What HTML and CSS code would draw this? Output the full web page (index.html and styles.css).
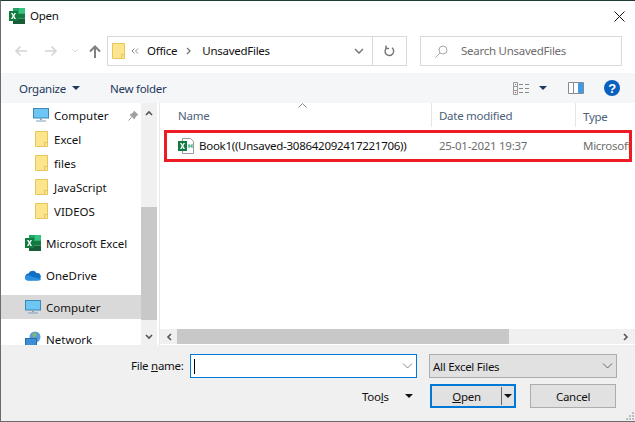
FILE: index.html
```html
<!DOCTYPE html>
<html>

<head>
  <meta charset="utf-8">
  <title>Open</title>
  <link rel="stylesheet" href="styles.css">
</head>

<body>
  <svg class="defs" width="0" height="0">
    <symbol id="folder" viewBox="0 0 13 16">
      <path d="M.5.5h12v15H.5z" fill="#fce58f" stroke="#e8c55a" />
      <path d="M9.5 15.5v-4h3" fill="none" stroke="#e8c55a" />
    </symbol>
    <symbol id="xl" viewBox="0 0 16 16">
      <path d="M4 0h12v5.300H4z" fill="#21a366" />
      <path d="M4 5.300h12v5.400H4z" fill="#107c41" />
      <path d="M4 10.700h12V16H4z" fill="#185c37" />
      <path d="M10 0h6v5.300h-6z" fill="#33c481" />
      <rect x="0" y="3" width="9" height="10" fill="#107c41" />
      <path d="M2 5h1.500l1 1.800 1-1.800H7L5.300 8 7 11H5.500l-1-1.800-1 1.800H2l1.700-3z" fill="#fff" />
    </symbol>
    <symbol id="monitor" viewBox="0 0 16 14">
      <rect x=".5" y=".5" width="15" height="9.500" fill="#6ec6f5" stroke="#3f87b5" />
      <path d="M7 10.500h2V12H7z" fill="#8aa4b8" />
      <path d="M3 13h10" stroke="#7f9db5" />
    </symbol>
  </svg>

  <div class="dialog">
    <header class="titlebar">
      <svg class="title-icon" width="16" height="16"><use href="#xl" /></svg>
      <span class="title-text">Open</span>
      <svg class="close" width="11" height="11" viewBox="0 0 11 11">
        <path d="M.5.500l10 10M10.500.500l-10 10" stroke="#111" fill="none" />
      </svg>
    </header>

    <nav class="navbar">
      <div class="nav-buttons">
        <svg width="14" height="12" viewBox="0 0 14 12"><path d="M13 6H2M6.500 1.500L2 6l4.500 4.500" stroke="#d4d4d4" stroke-width="1.500" fill="none" /></svg>
        <svg class="nav-fwd" width="14" height="12" viewBox="0 0 14 12"><path d="M1 6h11M7.500 1.500L12 6l-4.500 4.500" stroke="#d4d4d4" stroke-width="1.500" fill="none" /></svg>
        <svg class="nav-down" width="6" height="4" viewBox="0 0 6 4"><path d="M.500.500L3 3 5.500.500" stroke="#d4d4d4" fill="none" /></svg>
        <svg class="nav-up" width="12" height="13" viewBox="0 0 12 13"><path d="M6 13V2M1 6.500L6 1.500l5 5" stroke="#808080" stroke-width="2" fill="none" /></svg>
      </div>
      <div class="address">
        <svg class="addr-folder" width="13" height="16"><use href="#folder" /></svg>
        <svg class="addr-more" width="8" height="6" viewBox="0 0 8 6"><path d="M3.500.500L1 3l2.500 2.500M7 .500L4.500 3 7 5.500" stroke="#888" fill="none" /></svg>
        <span class="crumb">Office</span>
        <svg class="addr-sep" width="5" height="8" viewBox="0 0 5 8"><path d="M1 1l3 3-3 3" stroke="#777" stroke-width="1.300" fill="none" /></svg>
        <span class="crumb">UnsavedFiles</span>
        <svg class="addr-chev" width="10" height="6" viewBox="0 0 10 6"><path d="M1 1l4 4 4-4" stroke="#777" stroke-width="1.500" fill="none" /></svg>
        <div class="refresh">
          <svg width="11" height="12" viewBox="0 0 11 12"><path d="M3 2.600a4.300 4.300 0 1 0 5 .2M2 .5v3h3" stroke="#777" stroke-width="1.400" fill="none" /></svg>
        </div>
      </div>
      <div class="search">
        <svg width="13" height="13" viewBox="0 0 13 13"><circle cx="8" cy="5" r="4" stroke="#a8a8a8" fill="none" /><path d="M5 8l-4.500 4.500" stroke="#b89c8a" fill="none" /></svg>
        <span class="search-text">Search UnsavedFiles</span>
      </div>
    </nav>

    <div class="toolbar">
      <span class="tool-btn organize">Organize</span>
      <i class="tri tri-navy organize-tri"></i>
      <span class="tool-btn new-folder">New folder</span>
      <svg class="view-icon" width="16" height="13" viewBox="0 0 16 13">
        <path d="M.5.500h4v12h-4zM.5 4.500h4M.5 8.500h4" stroke="#999" fill="none" />
        <path d="M6 2.500h4M12 2.500h4M6 6.500h4M12 6.500h4M6 10.500h4M12 10.500h4" stroke="#888" />
        <path d="M2 2h1v1H2z" fill="#4a7ab5" /><path d="M2 10h1v1H2z" fill="#c33" />
      </svg>
      <i class="tri tri-navy view-tri"></i>
      <svg class="pane-icon" width="16" height="12" viewBox="0 0 16 12">
        <path d="M.5.500h15v11H.5z" fill="#fff" stroke="#8a8a8a" />
        <path d="M10 1h5v10h-5z" fill="#3f9be8" />
        <path d="M5.500 1v10" stroke="#8a8a8a" />
      </svg>
      <svg class="help-icon" width="16" height="16" viewBox="0 0 16 16">
        <circle cx="8" cy="8" r="8" fill="#0a5fc0" />
        <text x="8" y="12.500" class="help-mark" text-anchor="middle">?</text>
      </svg>
    </div>

    <main class="browser">
      <aside class="sidebar">
        <ul class="tree">
          <li class="tree-row indent">
            <svg width="16" height="14"><use href="#monitor" /></svg>
            <span>Computer</span>
            <svg class="pin" width="11" height="11" viewBox="0 0 11 11"><path d="M6 .5l4.500 4.500-1.500.5L7 8 6.500 9.500 1.500 4.500 3 4l2.500-2z" fill="#a0a0a0" /><path d="M3.500 7.500L.5 10.500" stroke="#a0a0a0" /></svg>
          </li>
          <li class="tree-row indent"><svg class="small-folder" width="13" height="16"><use href="#folder" /></svg><span>Excel</span></li>
          <li class="tree-row indent"><svg class="small-folder" width="13" height="16"><use href="#folder" /></svg><span>files</span></li>
          <li class="tree-row indent"><svg class="small-folder" width="13" height="16"><use href="#folder" /></svg><span>JavaScript</span></li>
          <li class="tree-row indent"><svg class="small-folder" width="13" height="16"><use href="#folder" /></svg><span>VIDEOS</span></li>
        </ul>
        <ul class="tree">
          <li class="tree-row"><svg width="16" height="16"><use href="#xl" /></svg><span>Microsoft Excel</span></li>
        </ul>
        <ul class="tree">
          <li class="tree-row">
            <svg width="16" height="11" viewBox="0 0 16 11"><path d="M4 10.500a3.500 3.500 0 0 1-.5-7A4.500 4.500 0 0 1 11.500 3a3.700 3.700 0 0 1 1 7.500z" fill="#0f6fc6" /><path d="M0 8.500a3 3 0 0 1 3-3.500l5 2 8 2a2 2 0 0 1-2 1.500H2.500A2.500 2.500 0 0 1 0 8.500z" fill="#2a8fe0" /></svg>
            <span>OneDrive</span>
          </li>
        </ul>
        <ul class="tree">
          <li class="tree-row selected"><svg width="16" height="14"><use href="#monitor" /></svg><span>Computer</span></li>
        </ul>
        <ul class="tree">
          <li class="tree-row">
            <svg width="16" height="16" viewBox="0 0 16 16"><circle cx="10" cy="6" r="5.500" fill="#5a9bd5" /><path d="M7 3l3-2 2 3-3 3z" fill="#7cb87a" /><rect x=".5" y="7.500" width="11" height="8" fill="#3d8ed6" stroke="#2a6aa5" /></svg>
            <span>Network</span>
          </li>
        </ul>
      </aside>

      <div class="vscroll">
        <div class="vscroll-up"><svg width="8" height="6" viewBox="0 0 8 6"><path d="M1 5l3-3 3 3" stroke="#555" stroke-width="1.600" fill="none" /></svg></div>
        <div class="vscroll-thumb"></div>
        <div class="vscroll-down"><svg width="8" height="6" viewBox="0 0 8 6"><path d="M1 1l3 3 3-3" stroke="#555" stroke-width="1.600" fill="none" /></svg></div>
      </div>

      <section class="files">
        <svg class="sort-caret" width="9" height="5" viewBox="0 0 9 5"><path d="M.5 4.500l4-4 4 4" stroke="#888" fill="none" /></svg>
        <div class="file-head">
          <span class="col-name">Name</span>
          <span class="col-date">Date modified</span>
          <span class="col-type">Type</span>
        </div>
        <div class="file-row">
          <svg class="file-icon" width="16" height="16" viewBox="0 0 16 16">
            <path d="M4.500.5h8l3 3v12h-11z" fill="#fff" stroke="#9a9a9a" />
            <rect x="0" y="3" width="9" height="10" fill="#107c41" />
            <path d="M2 5h1.500l1 1.800 1-1.800H7L5.300 8 7 11H5.500l-1-1.800-1 1.800H2l1.700-3z" fill="#fff" />
            <path d="M11 6v4M14 6v4M11 8h3" stroke="#21a366" />
          </svg>
          <span class="file-name">Book1((Unsaved-308642092417221706))</span>
          <span class="file-date">25-01-2021 19:37</span>
          <span class="file-type">Microsoft</span>
        </div>
        <div class="file-space"></div>
        <div class="hscroll">
          <div class="hscroll-left"><svg width="6" height="8" viewBox="0 0 6 8"><path d="M5 1L2 4l3 3" stroke="#555" stroke-width="1.600" fill="none" /></svg></div>
          <div class="hscroll-thumb"></div>
          <div class="hscroll-right"><svg width="6" height="8" viewBox="0 0 6 8"><path d="M1 1l3 3-3 3" stroke="#555" stroke-width="1.600" fill="none" /></svg></div>
        </div>
      </section>
    </main>

    <footer class="actions">
      <div class="action-row">
        <label class="name-label">File <u>n</u>ame:</label>
        <div class="name-input">
          <i class="caret"></i>
          <svg class="chev" width="11" height="6" viewBox="0 0 11 6"><path d="M1 .5l4.500 4.500L10 .5" stroke="#888" fill="none" /></svg>
        </div>
        <div class="type-select">
          <span>All Excel Files</span>
          <svg class="chev" width="11" height="6" viewBox="0 0 11 6"><path d="M1 .5l4.500 4.500L10 .5" stroke="#666" fill="none" /></svg>
        </div>
      </div>
      <div class="action-row buttons">
        <span class="tools">Too<u>l</u>s</span>
        <i class="tri tri-dark tools-tri"></i>
        <button class="btn btn-open">
          <span class="open-label"><u>O</u>pen</span>
          <span class="open-split"><i class="tri tri-dark"></i></span>
        </button>
        <button class="btn btn-cancel">Cancel</button>
      </div>
      <svg class="grip" width="10" height="10" viewBox="0 0 10 10">
        <path d="M7 1h2v2H7zM4 4h2v2H4zM7 4h2v2H7zM1 7h2v2H1zM4 7h2v2H4zM7 7h2v2H7z" fill="#bdbdbd" />
      </svg>
    </footer>
  </div>
</body>

</html>
```

FILE: styles.css
```css
html,
body {
  margin: 0;
  padding: 0;
}

body {
  width: 635px;
  height: 422px;
  overflow: hidden;
  font-family: "Noto Sans", "Open Sans", sans-serif;
  font-size: 11.5px;
  letter-spacing: -0.27px;
  color: #111;
  background: #fff;
}

.defs {
  position: absolute;
}

svg {
  display: block;
  flex: none;
}

ul {
  list-style: none;
  margin: 0;
  padding: 0;
}

.dialog {
  display: flex;
  flex-direction: column;
  box-sizing: border-box;
  height: 422px;
  border-top: 1px solid #1e3d30;
  border-left: 1px solid #6b6b6b;
  border-bottom: 1px solid #6b6b6b;
}

/* title */
.titlebar {
  display: flex;
  align-items: center;
  height: 30px;
  padding-left: 8px;
  padding-right: 10px;
}

.title-text {
  margin-left: 5px;
  padding-bottom: 2px;
}

.close {
  margin-left: auto;
}

/* address row */
.navbar {
  display: flex;
  height: 42px;
  box-sizing: border-box;
  padding-top: 5px;
}

.nav-buttons {
  display: flex;
  align-items: center;
  width: 106px;
  height: 30px;
  padding-left: 13px;
  box-sizing: border-box;
}

.nav-fwd {
  margin-left: 16px;
}

.nav-down {
  margin-left: 14px;
}

.nav-up {
  margin-left: 11px;
}

.address {
  display: flex;
  align-items: center;
  width: 300px;
  height: 30px;
  box-sizing: border-box;
  border: 1px solid #d9d9d9;
}

.addr-folder {
  margin-left: 4px;
}

.addr-more {
  margin-left: 6px;
}

.crumb {
  margin-left: 8px;
  padding-bottom: 2px;
}

.addr-sep {
  margin-left: 9px;
  margin-right: 3px;
}

.addr-chev {
  margin-left: auto;
  margin-right: 8px;
}

.refresh {
  display: flex;
  align-items: center;
  justify-content: center;
  width: 33px;
  height: 28px;
  border-left: 1px solid #d9d9d9;
}

.search {
  display: flex;
  align-items: center;
  width: 202px;
  height: 30px;
  margin-left: 13px;
  padding-left: 14px;
  box-sizing: border-box;
  border: 1px solid #d9d9d9;
}

.search-text {
  margin-left: 13px;
  padding-bottom: 2px;
  color: #6d6d6d;
}

/* command bar */
.toolbar {
  display: flex;
  align-items: center;
  height: 30px;
  padding-left: 18px;
  background: #f5f6f7;
  color: #1e395b;
}

.tri {
  display: block;
  width: 0;
  height: 0;
  border-left: 4px solid transparent;
  border-right: 4px solid transparent;
  border-top: 4px solid #000;
}

.tri-navy {
  border-top-color: #1e395b;
}

.tri-dark {
  border-top-color: #111;
}

.organize {
  width: 53px;
}

.new-folder {
  margin-left: 30px;
}

.view-icon {
  margin-left: auto;
}

.view-tri {
  margin-left: 10px;
}

.pane-icon {
  margin-left: 21px;
}

.help-icon {
  margin-left: 20px;
  margin-right: 15px;
}

.help-mark {
  font-family: "Liberation Sans", sans-serif;
  font-size: 13px;
  font-weight: 700;
  fill: #fff;
}

/* main area */
.browser {
  display: flex;
  height: 242px;
  flex: none;
}

.sidebar {
  flex: none;
  width: 140px;
  height: 242px;
  overflow: hidden;
  letter-spacing: 0;
}

.tree {
  margin-bottom: 8px;
}

.tree-row {
  display: flex;
  align-items: center;
  gap: 5px;
  height: 24px;
  padding-left: 24px;
}

.tree-row.indent {
  padding-left: 32px;
}

.small-folder {
  margin-left: 2px;
  margin-right: 1px;
}

.selected {
  background: #d9d9d9;
}

.pin {
  margin-left: auto;
  margin-right: 2px;
}

.vscroll {
  display: flex;
  flex-direction: column;
  flex: none;
  width: 16px;
  height: 242px;
  background: #f0f0f0;
}

.vscroll-up {
  display: flex;
  align-items: center;
  justify-content: center;
  height: 19px;
  margin-bottom: 85px;
}

.vscroll-thumb {
  height: 113px;
  background: #c8c8c8;
}

.vscroll-down {
  display: flex;
  align-items: center;
  justify-content: center;
  flex: 1;
  padding-top: 9px;
  box-sizing: border-box;
}

.files {
  position: relative;
  display: flex;
  flex-direction: column;
  flex: 1;
  min-width: 0;
  margin-left: 2px;
  border-left: 1px solid #e8e8e8;
}

.sort-caret {
  position: absolute;
  left: 138px;
  top: 0;
}

.file-head {
  display: flex;
  align-items: center;
  height: 24px;
  flex: none;
  color: #4c607a;
}

.col-name {
  width: 272px;
  box-sizing: border-box;
  padding-top: 1px;
  padding-left: 18px;
  border-right: 1px solid #e5e5e5;
  line-height: 23px;
}

.col-date {
  width: 144px;
  box-sizing: border-box;
  padding-top: 1px;
  padding-left: 7px;
  border-right: 1px solid #e5e5e5;
  line-height: 23px;
}

.col-type {
  padding-top: 2px;
  padding-left: 7px;
}

.file-row {
  display: flex;
  align-items: center;
  height: 32px;
  flex: none;
  box-sizing: border-box;
  margin: 3px 3px 0 4px;
  border: 3px solid #ed1c24;
  padding-left: 11px;
  overflow: hidden;
}

.file-icon {
  margin-right: 5px;
}

.file-name {
  flex: none;
  width: 240px;
  padding-bottom: 2px;
  white-space: nowrap;
}

.file-date {
  flex: none;
  width: 144px;
  padding-bottom: 2px;
  color: #6d6d6d;
}

.file-type {
  padding-bottom: 2px;
  color: #6d6d6d;
}

.file-space {
  flex: 1;
}

.hscroll {
  display: flex;
  height: 15px;
  flex: none;
  margin-bottom: 1px;
  background: #f0f0f0;
}

.hscroll-left {
  display: flex;
  align-items: center;
  justify-content: center;
  width: 17px;
}

.hscroll-thumb {
  width: 332px;
  background: #c8c8c8;
}

.hscroll-right {
  display: flex;
  align-items: center;
  justify-content: flex-end;
  flex: 1;
  padding-right: 6px;
}

/* bottom */
.actions {
  position: relative;
  flex: 1;
  background: #f0f0f0;
  padding-top: 9px;
}

.action-row {
  display: flex;
  align-items: center;
  height: 24px;
}

.name-label {
  margin-left: 130px;
  width: 59px;
  padding-bottom: 2px;
}

.name-input {
  display: flex;
  align-items: center;
  width: 227px;
  height: 24px;
  box-sizing: border-box;
  border: 1px solid #0078d7;
  background: #fff;
  padding-left: 3px;
  padding-right: 3px;
}

.caret {
  display: block;
  width: 1px;
  height: 15px;
  background: #000;
}

.chev {
  margin-left: auto;
}

.type-select {
  display: flex;
  align-items: center;
  width: 188px;
  height: 24px;
  margin-left: 12px;
  padding: 0 3px;
  box-sizing: border-box;
  border: 1px solid #adadad;
  background: #e1e1e1;
}

.buttons {
  margin-top: 6px;
}

.tools {
  width: 43px;
  margin-left: 361px;
}

.btn {
  display: flex;
  align-items: center;
  height: 24px;
  padding: 0;
  box-sizing: border-box;
  font: inherit;
  letter-spacing: inherit;
  color: inherit;
  background: #e1e1e1;
  border: 1px solid #adadad;
}

.btn-open {
  width: 86px;
  margin-left: 17px;
  border: 2px solid #0078d7;
}

.open-label {
  flex: 1;
  text-align: center;
}

.open-split {
  display: flex;
  align-items: center;
  justify-content: center;
  width: 12px;
  height: 18px;
  border-left: 1px solid #666;
}

.btn-cancel {
  justify-content: center;
  width: 86px;
  margin-left: 14px;
}

.grip {
  position: absolute;
  right: 0;
  bottom: 0;
}
```
